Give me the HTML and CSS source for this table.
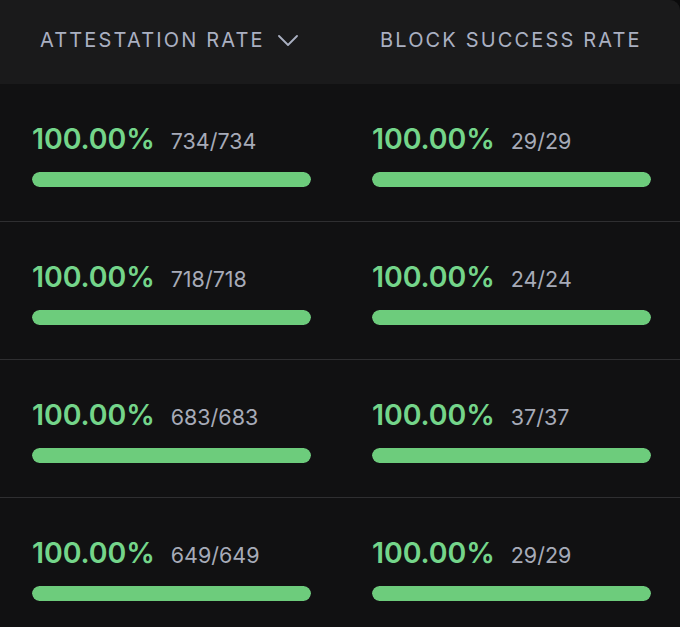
FILE: index.html
```html
<!DOCTYPE html>
<html>
<head>
<meta charset="utf-8">
<link rel="stylesheet" href="styles.css">
</head>
<body>
<div class="table">
  <div class="head">
    <div class="hcell">ATTESTATION RATE
      <svg class="chev" width="20" height="11" viewBox="0 0 20 11"><path d="M1 1 L10 10 L19 1" fill="none" stroke="#aab0c2" stroke-width="1.8" stroke-linecap="round" stroke-linejoin="round"/></svg>
    </div>
    <div class="hcell">BLOCK SUCCESS RATE</div>
  </div>
  <div class="row">
    <div class="cell"><div class="vals"><span class="pct">100.00%</span><span class="cnt">734/734</span></div><div class="bar"><div class="fill" style="width:100%"></div></div></div>
    <div class="cell"><div class="vals"><span class="pct">100.00%</span><span class="cnt">29/29</span></div><div class="bar"><div class="fill" style="width:100%"></div></div></div>
  </div>
  <div class="row">
    <div class="cell"><div class="vals"><span class="pct">100.00%</span><span class="cnt">718/718</span></div><div class="bar"><div class="fill" style="width:100%"></div></div></div>
    <div class="cell"><div class="vals"><span class="pct">100.00%</span><span class="cnt">24/24</span></div><div class="bar"><div class="fill" style="width:100%"></div></div></div>
  </div>
  <div class="row">
    <div class="cell"><div class="vals"><span class="pct">100.00%</span><span class="cnt">683/683</span></div><div class="bar"><div class="fill" style="width:100%"></div></div></div>
    <div class="cell"><div class="vals"><span class="pct">100.00%</span><span class="cnt">37/37</span></div><div class="bar"><div class="fill" style="width:100%"></div></div></div>
  </div>
  <div class="row">
    <div class="cell"><div class="vals"><span class="pct">100.00%</span><span class="cnt">649/649</span></div><div class="bar"><div class="fill" style="width:100%"></div></div></div>
    <div class="cell"><div class="vals"><span class="pct">100.00%</span><span class="cnt">29/29</span></div><div class="bar"><div class="fill" style="width:100%"></div></div></div>
  </div>
</div>
</body>
</html>
```
FILE: styles.css
```css
html, body {
  margin: 0;
  padding: 0;
  background: #0b0b0c;
  font-family: Inter, "Noto Sans", sans-serif;
}
.table {
  width: 680px;
  height: 627px;
  overflow: hidden;
  background: #111112;
  border-top-right-radius: 10px;
}
.head {
  display: grid;
  grid-template-columns: 340px 340px;
  height: 84px;
  background: #1a1a1b;
}
.hcell {
  display: flex;
  align-items: center;
  padding-left: 40px;
  padding-bottom: 4px;
  font-size: 20px;
  letter-spacing: 2.15px;
  color: #aab0c2;
  font-weight: 400;
}
.chev {
  margin-left: 13px;
  margin-top: 1px;
}
.row {
  display: grid;
  grid-template-columns: 340px 340px;
  height: 137px;
  border-bottom: 1px solid #2f2f31;
}
.cell {
  padding: 37px 29px 0 32px;
}
.vals {
  display: flex;
  align-items: baseline;
  height: 36px;
  line-height: 36px;
}
.pct {
  font-size: 28.5px;
  font-weight: 600;
  color: #74d58a;
  letter-spacing: -0.1px;
}
.cnt {
  font-size: 21.5px;
  color: #a7abb8;
  margin-left: 16px;
}
.bar {
  margin-top: 15px;
  height: 15px;
  border-radius: 8px;
  background: #2a2a2c;
  overflow: hidden;
}
.fill {
  height: 100%;
  background: #6dcc7c;
  border-radius: 8px;
}
```
